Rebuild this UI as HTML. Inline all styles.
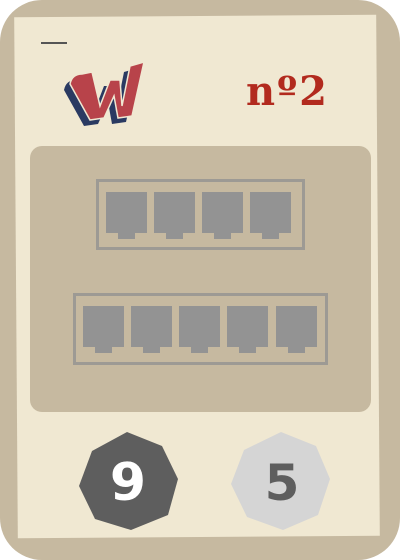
<!DOCTYPE html>
<html><head><meta charset="utf-8"><style>
html,body{margin:0;padding:0;background:#fff;}
body{width:400px;height:560px;position:relative;overflow:hidden;font-family:"Liberation Sans",sans-serif;}
.card{position:absolute;left:0;top:0;width:400px;height:560px;background:#c6b9a0;border-radius:42px;}
.inner{position:absolute;left:16px;top:16px;width:362px;height:521px;background:#f0e8d2;transform:rotate(-0.4deg);}
.panel{position:absolute;left:30px;top:146px;width:341px;height:266px;background:#c6b9a0;border-radius:12px;}
.frame{position:absolute;border:3px solid #9d9a94;box-sizing:border-box;}
.port{position:absolute;width:41px;height:41px;background:#939393;}
.port:after{content:"";position:absolute;left:12px;top:41px;width:17px;height:6px;background:#939393;}
.dash{position:absolute;left:41px;top:42px;width:26px;height:1.5px;background:#555;}
.num{position:absolute;left:246px;top:72px;font-family:"DejaVu Serif",serif;font-weight:bold;font-size:40px;line-height:40px;color:#b22a1e;letter-spacing:2px;white-space:nowrap;}
</style></head><body>
<div class="card"></div>
<div class="inner"></div>
<div class="dash"></div>
<svg style="position:absolute;left:60px;top:58px" width="90" height="75" viewBox="0 0 90 75">
<g transform="translate(-6,6)" fill="#2a3a62">
<path d="M10 26 Q12 16 22 16 L32 14 L40 48 L50 22 L60 22 L62 48 L70 8 L84 4 L72 58 L58 60 L54 38 L44 60 L30 62 Z"/>
</g>
<g fill="#b8434a" stroke="#f0e8d2" stroke-width="1.5">
<path d="M10 26 Q12 16 22 16 L32 14 L40 48 L50 22 L60 22 L62 48 L70 8 L84 4 L72 58 L58 60 L54 38 L44 60 L30 62 Z"/>
</g>
</svg>
<div class="num">nº2</div>
<div class="panel"></div>
<div class="frame" style="left:96px;top:179px;width:209px;height:71px"></div>
<div class="port" style="left:106px;top:192px"></div>
<div class="port" style="left:154px;top:192px"></div>
<div class="port" style="left:202px;top:192px"></div>
<div class="port" style="left:250px;top:192px"></div>
<div class="frame" style="left:73px;top:293px;width:255px;height:72px"></div>
<div class="port" style="left:83px;top:306px"></div>
<div class="port" style="left:131px;top:306px"></div>
<div class="port" style="left:179px;top:306px"></div>
<div class="port" style="left:227px;top:306px"></div>
<div class="port" style="left:276px;top:306px"></div>
<svg style="position:absolute;left:0;top:0" width="400" height="560">
<polygon points="127,432 162,446 178,479 168,515 131,530 95,519 79,486 92,451" fill="#5e5e5e"/>
<polygon points="281,432 316,446 330,479 318,515 283,530 247,517 231,484 244,450" fill="#d5d5d5"/>
<text x="128" y="500" text-anchor="middle" font-family="DejaVu Sans,sans-serif" font-weight="bold" font-size="52" fill="#fff">9</text>
<text x="282" y="500" text-anchor="middle" font-family="DejaVu Sans,sans-serif" font-weight="bold" font-size="50" fill="#5e5e5e">5</text>
</svg>
</body></html>
